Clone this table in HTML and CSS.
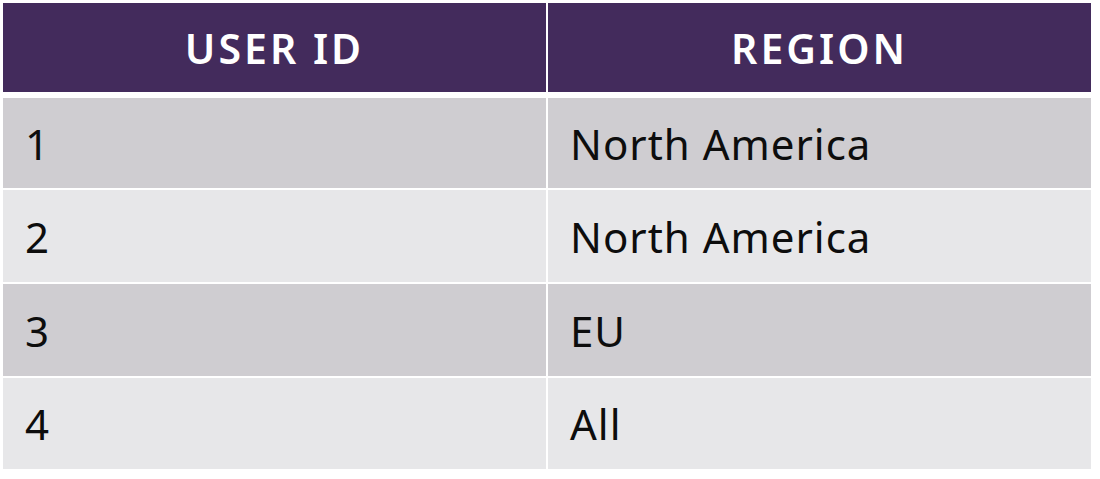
FILE: index.html
```html
<!DOCTYPE html>
<html>
<head>
<meta charset="utf-8">
<link rel="stylesheet" href="styles.css">
</head>
<body>
<div class="table">
  <div class="row thead">
    <div class="cell head">USER ID</div>
    <div class="cell head">REGION</div>
  </div>
  <div class="tbody">
    <div class="row odd r1">
      <div class="cell">1</div>
      <div class="cell">North America</div>
    </div>
    <div class="row even r2">
      <div class="cell">2</div>
      <div class="cell">North America</div>
    </div>
    <div class="row odd r3">
      <div class="cell">3</div>
      <div class="cell">EU</div>
    </div>
    <div class="row even r4">
      <div class="cell">4</div>
      <div class="cell">All</div>
    </div>
  </div>
</div>
</body>
</html>
```
FILE: styles.css
```css
html, body {
  margin: 0;
  padding: 0;
  background: #ffffff;
}
body {
  padding: 3px 0 0 3px;
  font-family: "Noto Sans", "Liberation Sans", sans-serif;
}
.table {
  width: 1088px;
  display: flex;
  flex-direction: column;
  gap: 6px;
}
.tbody {
  display: flex;
  flex-direction: column;
  gap: 2px;
}
.row {
  display: grid;
  grid-template-columns: 543px 543px;
  column-gap: 2px;
}
.thead { height: 89px; }
.r1 { height: 90px; }
.r2 { height: 92px; }
.r3 { height: 92px; }
.r4 { height: 91px; }
.cell {
  display: flex;
  align-items: center;
  padding-left: 22px;
  font-size: 42px;
  letter-spacing: 1px;
  color: #0d0d0d;
}
.head {
  background: #432b5c;
  color: #ffffff;
  font-weight: 600;
  justify-content: center;
  padding-left: 0;
  font-size: 41px;
  letter-spacing: 3px;
}
.odd .cell { background: #cfcdd1; }
.even .cell { background: #e7e7e9; }
```
